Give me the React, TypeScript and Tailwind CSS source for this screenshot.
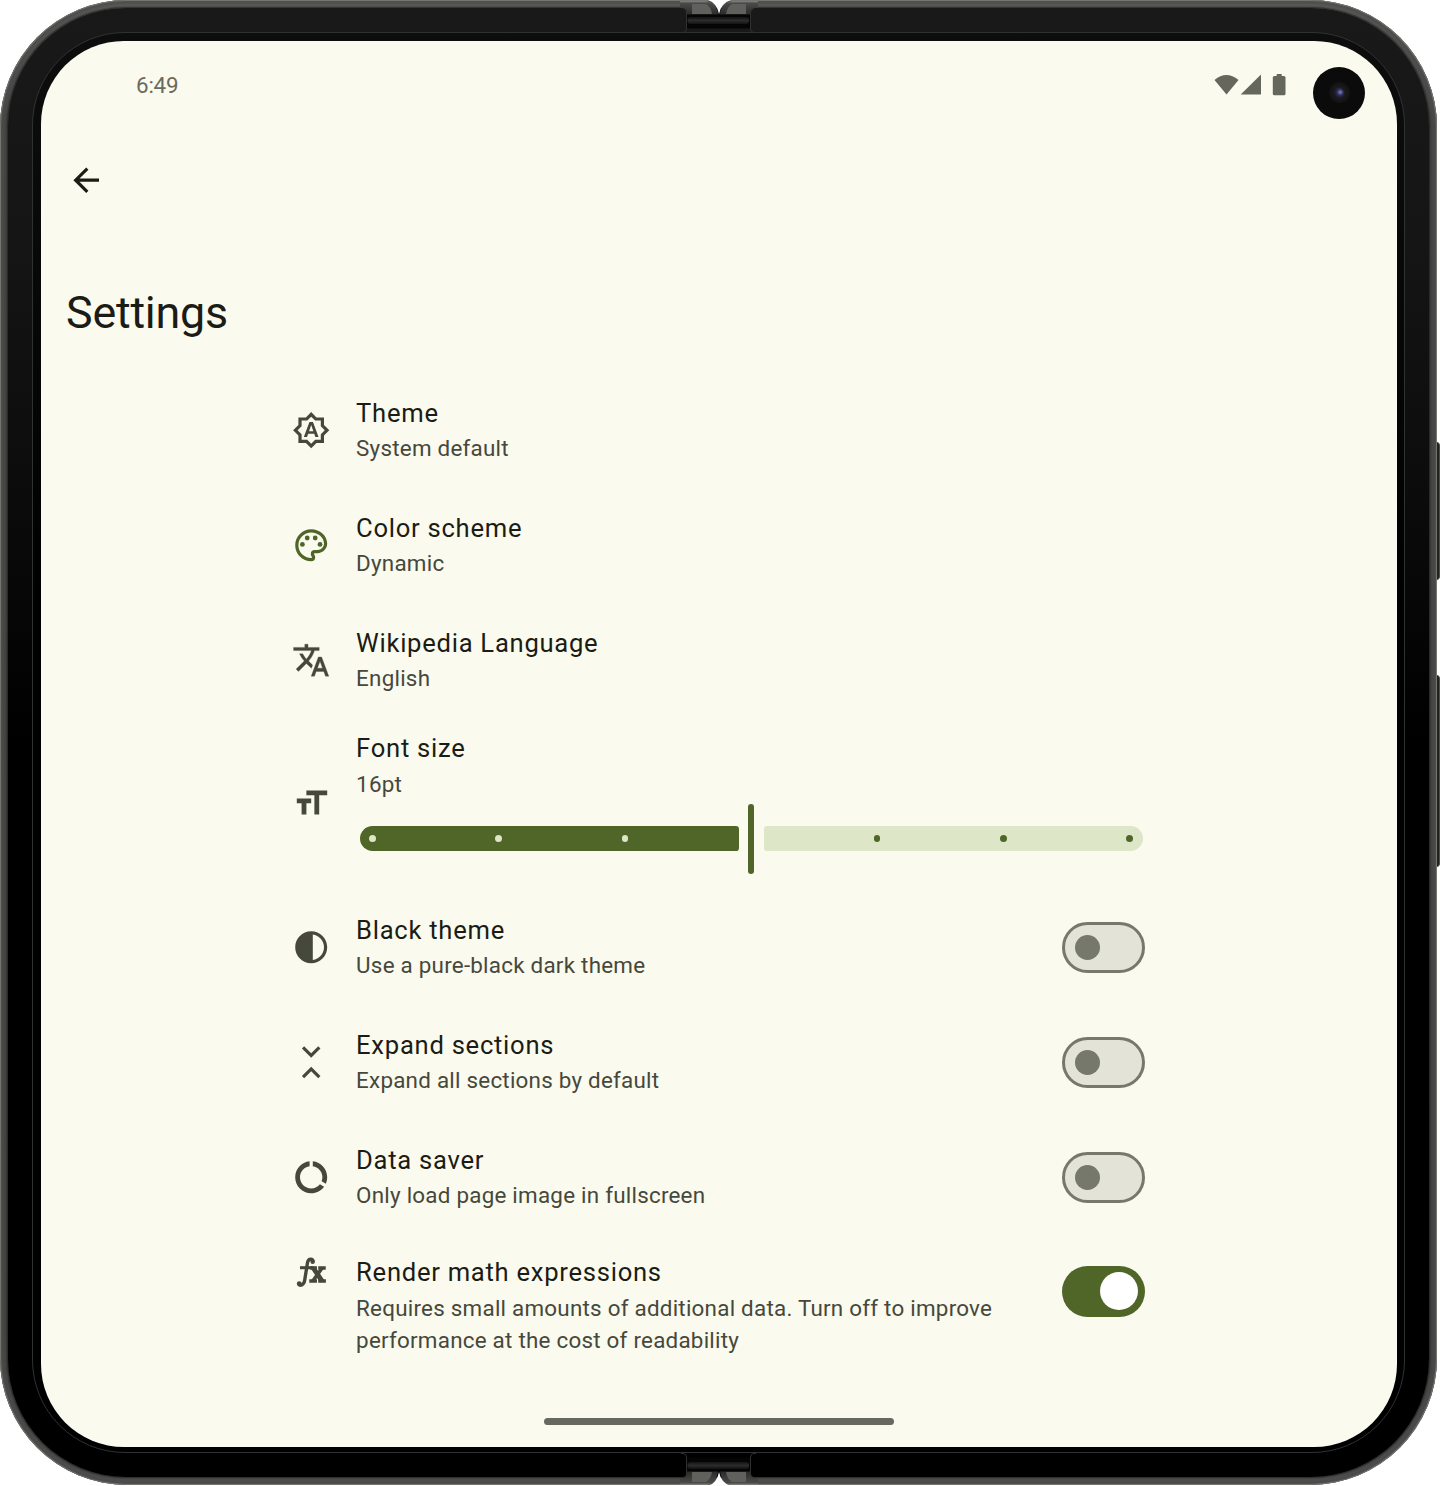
import React from 'react';

type IconProps = { className?: string; children: React.ReactNode };

function Icon({ className = 'text-[#46483c]', children }: IconProps) {
  return (
    <svg viewBox="0 0 24 24" fill="currentColor" className={`size-[38.4px] shrink-0 ${className}`}>
      {children}
    </svg>
  );
}

const icons = {
  theme: (
    <Icon>
      <path d="M10.9 6.800l-3.500 9.400h2l.7-2h3.800l.7 2h2L13.100 6.800h-2.200zm-.25 5.850L12 8.800l1.350 3.850h-2.700zM20 8.690V4h-4.690L12 .69 8.690 4H4v4.690L.69 12 4 15.310V20h4.690L12 23.310 15.310 20H20v-4.690L23.310 12 20 8.690zm-2 5.790V18h-3.520L12 20.480 9.520 18H6v-3.520L3.520 12 6 9.520V6h3.520L12 3.520 14.480 6H18v3.520L20.480 12 18 14.480z" />
    </Icon>
  ),
  palette: (
    <Icon className="text-[#4f6628]">
      <path d="M12 22C6.49 22 2 17.51 2 12S6.49 2 12 2s10 4.04 10 9c0 3.31-2.69 6-6 6h-1.77c-.28 0-.5.22-.5.5 0 .12.05.23.13.33.41.47.64 1.06.64 1.67A2.5 2.5 0 0112 22zm0-18c-4.41 0-8 3.59-8 8s3.59 8 8 8c.28 0 .5-.22.5-.5a.54.54 0 00-.14-.35c-.41-.46-.63-1.05-.63-1.65a2.5 2.5 0 012.5-2.5H16c2.21 0 4-1.79 4-4 0-3.86-3.59-7-8-7z" />
      <circle cx="6.5" cy="11.5" r="1.5" />
      <circle cx="9.5" cy="7.5" r="1.5" />
      <circle cx="14.5" cy="7.5" r="1.5" />
      <circle cx="17.5" cy="11.5" r="1.5" />
    </Icon>
  ),
  translate: (
    <Icon>
      <path d="M12.87 15.07l-2.54-2.51.03-.03c1.74-1.94 2.98-4.17 3.71-6.53H17V4h-7V2H8v2H1v1.99h11.17C11.5 7.92 10.44 9.75 9 11.35 8.07 10.32 7.3 9.19 6.69 8h-2c.73 1.63 1.73 3.17 2.98 4.56l-5.09 5.02L4 19l5-5 3.11 3.11.76-2.04zM18.5 10h-2L12 22h2l1.12-3h4.75L21 22h2l-4.5-12zm-2.62 7l1.62-4.33L19.12 17h-3.24z" stroke="currentColor" strokeWidth="0.2" />
    </Icon>
  ),
  fontSize: (
    <Icon>
      <path d="M9 4v3h5v12h3V7h5V4H9zm-6 8h3v7h3v-7h3V9H3v3z" />
    </Icon>
  ),
  contrast: (
    <Icon>
      <path d="M12 22c5.52 0 10-4.48 10-10S17.52 2 12 2 2 6.48 2 12s4.48 10 10 10zm1-17.93c3.94.49 7 3.85 7 7.93s-3.05 7.44-7 7.93V4.07z" />
    </Icon>
  ),
  unfold: (
    <Icon>
      <path d="M7.6 22l-1.4-1.4L12 14.8l5.8 5.8-1.4 1.4-4.4-4.35L7.6 22zM12 9.15L6.2 3.4 7.6 2 12 6.35 16.4 2l1.4 1.4L12 9.15z" />
    </Icon>
  ),
  data: (
    <Icon>
      <path d="M13 2.05v3.03c3.39.49 6 3.39 6 6.92 0 .9-.18 1.75-.48 2.54l2.6 1.53c.56-1.24.88-2.62.88-4.07 0-5.18-3.95-9.45-9-9.95zM12 19c-3.87 0-7-3.13-7-7 0-3.53 2.61-6.43 6-6.92V2.05c-5.06.5-9 4.76-9 9.95 0 5.52 4.47 10 9.99 10 3.31 0 6.24-1.61 8.06-4.09l-2.6-1.53C16.17 17.98 14.21 19 12 19z" />
    </Icon>
  ),
  math: (
    <Icon>
      <g fill="none" stroke="currentColor" strokeWidth="2.1">
        <path d="M5 9.200h8.600" strokeWidth="1.900" />
        <path d="M13.200 5.600C13 3.400 10.300 3.200 9.700 6L7.900 17.200c-.5 3-3 3.600-3.700 2" />
        <path d="M13.200 9.200l5.600 8.400" strokeWidth="3" />
        <path d="M19.100 9l-6.200 8.700" strokeWidth="2.200" />
        <path d="M16.400 9.400h4.700M10.800 17.500h4.800M16.400 17.500h4.800M11.400 9.400h4.200" strokeWidth="2.200" />
      </g>
      <circle cx="12.900" cy="5.500" r="1.400" />
      <circle cx="4.500" cy="19.200" r="1.500" />
    </Icon>
  ),
};

function Switch({ on = false }: { on?: boolean }) {
  return on ? (
    <div className="flex h-[51px] w-[83.2px] shrink-0 items-center justify-end rounded-full bg-[#4f6628] pr-[6.9px]">
      <div className="size-[38px] rounded-full bg-white" />
    </div>
  ) : (
    <div className="flex h-[51px] w-[83.2px] shrink-0 items-center rounded-full border-[3px] border-[#76786b] bg-[#e3e3d8] pl-[9.8px]">
      <div className="size-[25px] rounded-full bg-[#76786b]" />
    </div>
  );
}

function Texts({ title, sub }: { title: string; sub: string }) {
  return (
    <div className="w-[665px]">
      <div className="text-[25.6px] leading-[38.4px] tracking-[0.73px] text-[#1b1c15]">{title}</div>
      <div className="text-[22.4px] leading-[32px] tracking-[0.24px] text-[#46483c]">{sub}</div>
    </div>
  );
}

function Row({ icon, title, sub, toggle }: { icon: React.ReactNode; title: string; sub: string; toggle?: boolean }) {
  return (
    <div className="flex h-[115px] items-center gap-[25.500px]">
      {icon}
      <div className="pb-[1.800px]">
        <Texts title={title} sub={sub} />
      </div>
      {toggle && (
        <div className="ml-auto">
          <Switch />
        </div>
      )}
    </div>
  );
}

function Dots({ color }: { color: string }) {
  return (
    <>
      {[0, 1, 2].map((i) => (
        <div key={i} className={`size-[6.6px] rounded-full ${color}`} />
      ))}
    </>
  );
}

function Slider() {
  return (
    <div className="ml-[3.500px] flex h-[70.4px] w-[783px] items-center">
      <div className="flex h-[25.6px] w-[379px] items-center justify-between rounded-l-[12.8px] rounded-r-[3.2px] bg-[#4f6628] pr-[110.4px] pl-[9.6px]">
        <Dots color="bg-[#dde6c6]" />
      </div>
      <div className="ml-[9.4px] h-[70.4px] w-[6.4px] rounded-full bg-[#4f6628]" />
      <div className="ml-[9.4px] flex h-[25.6px] flex-1 items-center justify-between rounded-l-[3.2px] rounded-r-[12.8px] bg-[#dde6c6] pr-[9.6px] pl-[110px]">
        <Dots color="bg-[#4f6628]" />
      </div>
    </div>
  );
}

function Hinge({ className }: { className: string }) {
  return (
    <svg viewBox="0 0 160 42" className={`absolute left-[640px] h-[42px] w-[160px] ${className}`}>
      <defs>
        <linearGradient id="cap" x1="0" y1="0" x2="0" y2="1">
          <stop offset="0" stopColor="#858a85" />
          <stop offset="0.15" stopColor="#4b4c4a" />
          <stop offset="0.55" stopColor="#3b3b3a" />
          <stop offset="1" stopColor="#292929" />
        </linearGradient>
        <linearGradient id="sheen" x1="0" y1="0" x2="0" y2="1">
          <stop offset="0" stopColor="#111" />
          <stop offset="0.5" stopColor="#2c2c2b" />
          <stop offset="1" stopColor="#141414" />
        </linearGradient>
      </defs>
      <path d="M68 0H91Q81 3 79 14Q77 3 68 0Z" fill="#fff" />
      <path d="M40 1H66Q77 3 78 15H47Q47 8 42 8H40Z" fill="url(#cap)" />
      <path d="M118 1H92Q81 3 80 15H110Q111 8 115 8H118Z" fill="url(#cap)" />
      <path d="M52 4H66Q71 7 72 14H52Z" fill="#60605c" />
      <path d="M106 4H92Q87 7 86 14H106Z" fill="#60605c" />
      <rect x="47" y="14.500" width="63" height="14" fill="#050505" />
      <rect x="47.500" y="17" width="61.500" height="7" rx="3" fill="url(#sheen)" />
      <path d="M41 32.500H43Q46.500 32.500 46.500 29V12Q46.500 8.500 43 8.500M116 32.500H114Q110.500 32.500 110.500 29V12Q110.500 8.500 114 8.500" fill="none" stroke="#303030" />
    </svg>
  );
}

function StatusBar() {
  return (
    <div className="flex h-[104px] justify-between pt-[26px] pr-[32px] pl-[95.500px]">
      <div className="mt-[4px] h-[28px] text-[22.4px] leading-[28px] tracking-[-0.2px] text-[#6a6b62]">6:49</div>
      <div className="flex">
        <svg viewBox="0 0 74 24" className="mt-[6px] h-[24px] w-[74px]" fill="#65665c">
          <path d="M0.500 7Q12.300-3 24.500 7L12.500 21.500Z" />
          <path d="M47 1.500V21.500H26.700Z" />
          <path d="M62.700 3V1H67.700V3H70Q71.500 3 71.500 4.500V20.700Q71.500 22.200 70 22.200H60.300Q58.800 22.200 58.800 20.700V4.500Q58.800 3 60.300 3Z" />
        </svg>
        <div className="ml-[25px] flex size-[52px] items-center justify-center rounded-full bg-[#0b0b0b]">
          <div className="flex size-[21px] items-center justify-center rounded-full bg-[radial-gradient(circle,#202026_20%,#141415_60%,#101010_100%)]">
            <div className="size-[10px] rounded-full bg-[radial-gradient(circle_at_62%_42%,#7f86c4_0%,#2e305c_35%,#17141f_75%)]" />
          </div>
        </div>
      </div>
    </div>
  );
}

export default function App() {
  return (
    <div className="relative h-[1486px] w-[1440px] overflow-hidden bg-white font-[Roboto,sans-serif]">
      <div className="absolute top-[442px] left-[1432px] h-[138px] w-[8px] rounded-r-[4px] border-r border-[#4b4b4a] bg-[#222]" />
      <div className="absolute top-[675px] left-[1432px] h-[192px] w-[8px] rounded-r-[4px] border-r border-[#4b4b4a] bg-[#222]" />
      <div className="relative h-[1485px] w-[1437px] rounded-[127px] bg-[linear-gradient(#6a6d68,#444_8%,#3f3f3f_90%,#555)] p-[8px] shadow-[inset_0_0_1px_1px_#777a75,inset_0_0_5px_5px_#4a4a49]">
        <div className="h-full rounded-[118px] bg-[linear-gradient(#191919,#151515_16%,#0c0c0c_32%,#000_50%)] p-[24px] shadow-[0_0_2px_1px_#222]">
          <div className="h-full rounded-[93px] border border-[#303131] bg-[linear-gradient(#0d0d0d,#000_40%)] p-[7.5px]">
            <div className="flex h-[1406px] w-[1356.500px] flex-col rounded-[83px] bg-[#fafaee]">
              <StatusBar />
              <div className="ml-[26px] flex h-[72px] items-center">
                <Icon className="text-[#1b1c15]">
                  <path d="M20 11H7.830l5.590-5.590L12 4l-8 8 8 8 1.410-1.410L7.830 13H20v-2z" />
                </Icon>
              </div>
              <h1 className="mt-[67px] ml-[25.500px] h-[58px] text-[44.8px] leading-[58px] tracking-[-0.2px] text-[#1b1c15]">Settings</h1>
              <div className="mt-[31px] ml-[251.700px] w-[853px]">
                <Row icon={icons.theme} title="Theme" sub="System default" />
                <Row icon={icons.palette} title="Color scheme" sub="Dynamic" />
                <Row icon={icons.translate} title="Wikipedia Language" sub="English" />
                <div className="flex h-[172px] items-center gap-[25.500px]">
                  {icons.fontSize}
                  <div className="mt-[-4px]">
                    <div className="pb-[4px]">
                      <Texts title="Font size" sub="16pt" />
                    </div>
                    <Slider />
                  </div>
                </div>
                <Row icon={icons.contrast} title="Black theme" sub="Use a pure-black dark theme" toggle />
                <Row icon={icons.unfold} title="Expand sections" sub="Expand all sections by default" toggle />
                <Row icon={icons.data} title="Data saver" sub="Only load page image in fullscreen" toggle />
                <div className="flex items-start gap-[25.500px] pt-[18.600px]">
                  {icons.math}
                  <Texts
                    title="Render math expressions"
                    sub="Requires small amounts of additional data. Turn off to improve performance at the cost of readability"
                  />
                  <div className="mt-[12.800px] ml-auto">
                    <Switch on />
                  </div>
                </div>
              </div>
              <div className="mt-auto mb-[22px] ml-[503px] h-[7px] w-[350px] rounded-full bg-[#67685f]" />
            </div>
          </div>
        </div>
      </div>
      <Hinge className="top-0" />
      <Hinge className="top-[1443.500px] -scale-y-100" />
    </div>
  );
}
